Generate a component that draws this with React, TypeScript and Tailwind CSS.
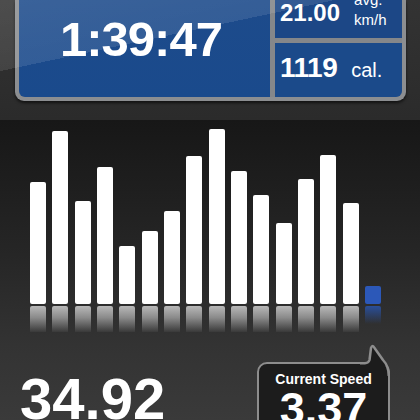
import React from "react";

const bars = [122, 173, 103, 137, 58, 73, 93, 148, 175, 133, 109, 81, 125, 149, 101];

export default function App() {
  return (
    <div
      className="w-[420px] h-[420px] overflow-hidden bg-[#2c2c2c] text-white"
      style={{ fontFamily: '"Liberation Sans", Arial, sans-serif' }}
    >
      {/* Top section */}
      <div className="relative h-[120px] bg-[linear-gradient(180deg,#333333_0%,#2b2b2b_100%)]">
        <div className="ml-[15px] w-[391px] h-[101px] border-x-[4px] border-b-[4px] border-[#8c8e91] rounded-b-[9px] bg-[#85878a] flex gap-[5px] shadow-[0_2px_3px_rgba(0,0,0,0.6)]">
          <div className="flex-1 bg-[linear-gradient(180deg,#1d4b8b_0%,#1a4a8c_100%)] rounded-bl-[6px] pl-[41px] pt-[15px]">
            <div className="text-[49px] leading-none font-bold tracking-[-1px]">1:39:47</div>
          </div>
          <div className="w-[127px] flex flex-col gap-[5px]">
            <div className="h-[38px] bg-[#1c4786] flex items-start pl-[5px]">
              <div className="text-[24px] leading-none font-bold pt-[1px]">21.00</div>
              <div className="ml-[14px] mt-[-10px] text-[15px] leading-[20px]">
                <div>avg.</div>
                <div>km/h</div>
              </div>
            </div>
            <div className="flex-1 bg-[#1b4a8a] rounded-br-[6px] flex items-baseline pl-[5px] pt-[11px]">
              <span className="text-[28px] leading-none font-bold tracking-[-0.5px]">1119</span>
              <span className="ml-[14px] text-[20px] leading-none">cal.</span>
            </div>
          </div>
        </div>
        {/* gloss overlay */}
        <div className="absolute inset-0 pointer-events-none bg-[linear-gradient(168deg,rgba(255,255,255,0.13)_0%,rgba(255,255,255,0.1)_34%,rgba(255,255,255,0)_34%)]" />
      </div>

      {/* Lower area */}
      <div className="h-[300px] bg-[linear-gradient(180deg,#171717_0%,#262626_45%,#333333_75%,#3a3a3a_100%)]">
        {/* Bars */}
        <div className="h-[184px] flex items-end gap-[6.33px] pl-[30px]">
          {bars.map((h, i) => (
            <div key={i} className="w-[16px] bg-white rounded-[2px]" style={{ height: h }} />
          ))}
          <div className="w-[16px] h-[18px] bg-[#2c58b8] rounded-[2px]" />
        </div>
        {/* Reflections */}
        <div className="mt-[2px] h-[26px] flex items-start gap-[6.33px] pl-[30px]">
          {bars.map((_, i) => (
            <div
              key={i}
              className="w-[16px] h-[26px] rounded-t-[2px] bg-[linear-gradient(180deg,#b8b8b8_0%,#8a8a8a_45%,rgba(90,90,90,0.2)_100%)]"
            />
          ))}
          <div className="w-[16px] h-[18px] rounded-t-[2px] bg-[linear-gradient(180deg,#2a4f9a_0%,rgba(42,79,154,0)_100%)]" />
        </div>

        {/* Bottom row */}
        <div className="flex items-start pl-[20px]">
          <div className="mt-[38px] text-[58px] leading-none font-bold">34.92</div>
          <div className="relative ml-auto mr-[30px] mt-[30px] w-[133px] h-[80px] border-[2.5px] border-[#8d8d8d] rounded-[10px] bg-[#1c1c1c] flex flex-col items-center pt-[7.5px]">
            <div className="text-[14px] leading-none font-bold">Current Speed</div>
            <div className="text-[45px] leading-none font-bold">3.37</div>
            <svg
              className="absolute left-[92.5px] top-[-22.5px]"
              width="42"
              height="42"
              viewBox="0 0 42 42"
            >
              <path
                d="M8 21.25 L13 21.25 Q16.5 21.25 17.5 18 L19 6 Q20.5 2 22.5 6 L31 18 Q36.75 24 36.75 34 L34 34 L34 24 L8 24 Z"
                fill="#1c1c1c"
              />
              <path
                d="M8 21.25 L13 21.25 Q16.5 21.25 17.5 18 L19 6 Q20.5 2 22.5 6 L31 18 Q36.75 24 36.75 34"
                fill="none"
                stroke="#8d8d8d"
                strokeWidth="2.5"
                strokeLinejoin="round"
              />
            </svg>
          </div>
        </div>
      </div>
    </div>
  );
}
